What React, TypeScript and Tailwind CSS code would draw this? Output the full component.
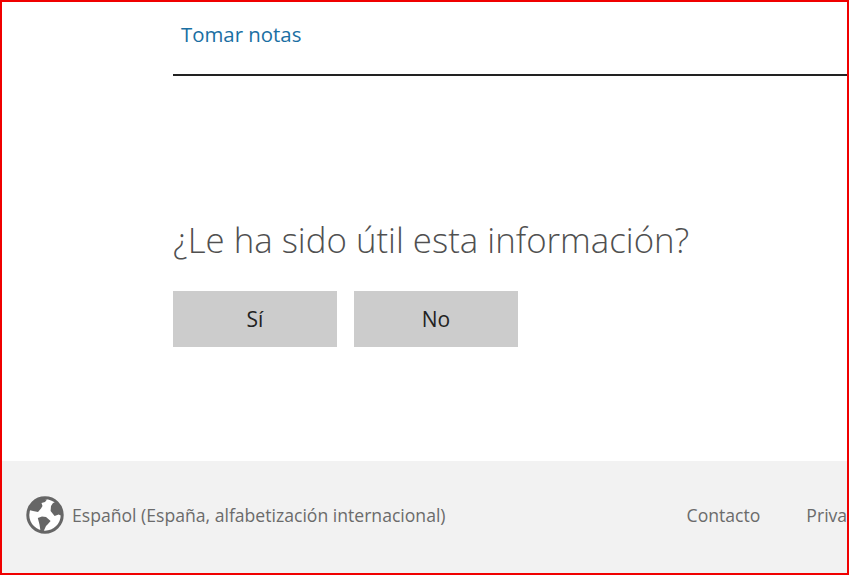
function Globe() {
  return (
    <svg width="38" height="38" viewBox="0 0 38 38" className="shrink-0">
      <circle cx="19" cy="19" r="17.2" fill="#fff" stroke="#666" strokeWidth="3" />
      {/* north america */}
      <path fill="#666" d="M6 7 L15 2.3 L21 3.5 L19 6 L15.5 7 L16.5 10 L15 12.5 L12 16 L7 15 L3 14 Z" />
      {/* south america */}
      <path fill="#666" d="M11.8 22 L16 20.5 L20 21 L24.6 25 L22 28 L20 30 L17.5 35.5 L14.5 35 L13.5 28.6 Z" />
      {/* africa / europe */}
      <path fill="#666" d="M25 10 L27 7 L31 5.5 L35 12 L36 20 L32.6 18.5 L28.6 20 L24.6 15 Z" />
    </svg>
  );
}

export default function App() {
  return (
    <div className="w-[849px] h-[575px] border-2 border-[#f00000] bg-white flex flex-col overflow-hidden font-['Open_Sans','Noto_Sans',sans-serif]">
      <main className="flex-1 pl-[171px]">
        <div className="h-[74px] border-b-2 border-[#222] pt-[17px] pl-2">
          <a className="block text-[20.4px] leading-[30px] text-[#1a6fa3]">Tomar notas</a>
        </div>
        <h2 className="mt-[141px] text-[34.8px] font-light leading-[46px] text-[#505050]">¿Le ha sido útil esta información?</h2>
        <div className="flex gap-[17px] mt-[28px]">
          <button className="w-[164px] h-[56px] bg-[#cccccc] text-[21px] pt-[2px] text-[#222]">Sí</button>
          <button className="w-[164px] h-[56px] bg-[#cccccc] text-[21px] pt-[2px] text-[#222]">No</button>
        </div>
      </main>
      <footer className="h-[112px] bg-[#f2f2f2] flex items-center pl-[24px] pb-[4px] text-[17.6px] text-[#6b6b6b] whitespace-nowrap">
        <Globe />
        <span className="ml-[8px]">Español (España, alfabetización internacional)</span>
        <a className="ml-[241px]">Contacto</a>
        <a className="ml-[46px]">Privacidad</a>
      </footer>
    </div>
  );
}
